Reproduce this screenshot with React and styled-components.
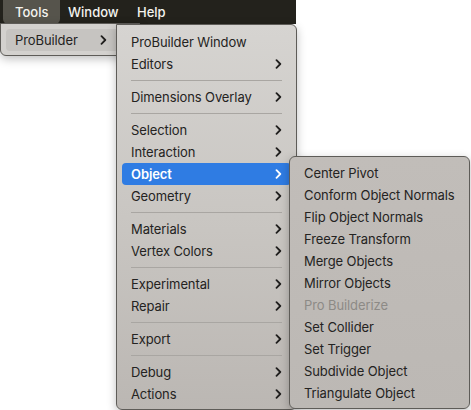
import styled, { createGlobalStyle } from 'styled-components';

const GlobalStyle = createGlobalStyle`
  html, body {
    margin: 0;
    padding: 0;
    background: #ffffff;
  }
  body {
    font-family: Inter, "Noto Sans", "Liberation Sans", sans-serif;
    -webkit-font-smoothing: antialiased;
  }
`;

const Screen = styled.div`
  position: relative;
  width: 471px;
  height: 410px;
  overflow: hidden;
  background: #ffffff;
`;

const MenuBar = styled.div`
  display: flex;
  align-items: center;
  width: 296px;
  height: 24px;
  padding-left: 3px;
  box-sizing: border-box;
  background: #23221c;
`;

const BarItem = styled.div`
  height: 24px;
  width: ${p => (p.$w ? `${p.$w}px` : 'auto')};
  display: flex;
  align-items: center;
  padding-left: ${p => p.$padL}px;
  box-sizing: border-box;
  color: #f4f3ef;
  font-size: 13px;
  font-weight: 500;
  border-radius: 0 0 5px 5px;
  background: ${p => (p.$active ? '#56544c' : 'transparent')};
`;

const Menu = styled.div`
  position: absolute;
  left: ${p => p.$x}px;
  top: ${p => p.$y}px;
  width: ${p => p.$w}px;
  padding: ${p => p.$padTop || 5}px 0 4px;
  box-sizing: border-box;
  border: 1px solid #5e5c58;
  border-radius: ${p => p.$radius || '0 6px 6px 6px'};
  background: ${p => p.$bg};
  box-shadow: 0 3px 10px rgba(0, 0, 0, 0.25);
`;

const Row = styled.div`
  height: 22px;
  margin: 0 5px;
  padding: 0 9px;
  display: flex;
  align-items: center;
  justify-content: space-between;
  border-radius: 4px;
  font-size: 13px;
  letter-spacing: -0.1px;
  color: ${p => (p.$disabled ? '#8d8a86' : p.$blue ? '#ffffff' : '#242322')};
  font-weight: ${p => (p.$blue ? 600 : 400)};
  background: ${p => (p.$blue ? '#2f7ce3' : p.$hover ? '#c6c4c1' : 'transparent')};
`;

const ArrowSlot = styled.span`
  display: flex;
  margin-right: ${p => p.$offset || 0}px;
`;

const Separator = styled.div`
  height: 11px;
  display: flex;
  align-items: center;
  margin: 0 14px;

  &::after {
    content: '';
    flex: 1;
    height: 1px;
    background: #a9a6a2;
  }
`;

const Chevron = ({ white }) => (
  <svg width="7" height="10" viewBox="0 0 7 10">
    <path
      d="M1.5 1.2 L5.3 5 L1.5 8.8"
      fill="none"
      stroke={white ? '#ffffff' : '#1f1e1d'}
      strokeWidth="1.8"
      strokeLinecap="round"
      strokeLinejoin="round"
    />
  </svg>
);

const mainItems = [
  { label: 'ProBuilder Window' },
  { label: 'Editors', sub: true },
  { sep: true },
  { label: 'Dimensions Overlay', sub: true },
  { sep: true },
  { label: 'Selection', sub: true },
  { label: 'Interaction', sub: true },
  { label: 'Object', sub: true, blue: true },
  { label: 'Geometry', sub: true },
  { sep: true },
  { label: 'Materials', sub: true },
  { label: 'Vertex Colors', sub: true },
  { sep: true },
  { label: 'Experimental', sub: true },
  { label: 'Repair', sub: true },
  { sep: true },
  { label: 'Export', sub: true },
  { sep: true },
  { label: 'Debug', sub: true },
  { label: 'Actions', sub: true },
];

const objectItems = [
  { label: 'Center Pivot' },
  { label: 'Conform Object Normals' },
  { label: 'Flip Object Normals' },
  { label: 'Freeze Transform' },
  { label: 'Merge Objects' },
  { label: 'Mirror Objects' },
  { label: 'Pro Builderize', disabled: true },
  { label: 'Set Collider' },
  { label: 'Set Trigger' },
  { label: 'Subdivide Object' },
  { label: 'Triangulate Object' },
];

function MenuList({ items }) {
  return items.map((it, i) =>
    it.sep ? (
      <Separator key={i} />
    ) : (
      <Row key={i} $blue={it.blue} $disabled={it.disabled}>
        <span>{it.label}</span>
        {it.sub && (
          <ArrowSlot>
            <Chevron white={it.blue} />
          </ArrowSlot>
        )}
      </Row>
    )
  );
}

export default function App() {
  return (
    <>
      <GlobalStyle />
      <Screen>
        <MenuBar>
          <BarItem $active $w={57} $padL={12}>Tools</BarItem>
          <BarItem $w={68} $padL={8}>Window</BarItem>
          <BarItem $padL={9}>Help</BarItem>
        </MenuBar>

        <Menu $x={0} $y={23} $w={140} $padTop={5} $bg="#d3d1ce" $radius="0 0 6px 6px">
          <Row $hover>
            <span>ProBuilder</span>
            <ArrowSlot $offset={18}>
              <Chevron />
            </ArrowSlot>
          </Row>
        </Menu>

        <Menu
          $x={116}
          $y={24}
          $w={181}
          $padTop={6}
          $bg="linear-gradient(180deg, #d6d4d1 0%, #c9c6c2 50%, #bbb7b3 100%)"
        >
          <MenuList items={mainItems} />
        </Menu>

        <Menu
          $x={289}
          $y={156}
          $w={181}
          $padTop={5}
          $radius="6px"
          $bg="linear-gradient(180deg, #c1bdb9 0%, #bcb8b4 100%)"
        >
          <MenuList items={objectItems} />
        </Menu>
      </Screen>
    </>
  );
}
